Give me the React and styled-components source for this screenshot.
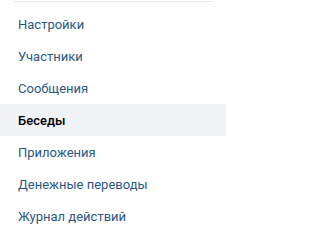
import styled, { createGlobalStyle } from "styled-components";

const GlobalStyle = createGlobalStyle`
  body {
    margin: 0;
    background: #fff;
    font-family: Roboto, "Open Sans", "Liberation Sans", sans-serif;
  }
`;

const Menu = styled.nav`
  width: 226px;
  display: flex;
  flex-direction: column;
`;

const Separator = styled.div`
  height: 1px;
  margin: 1px 13px 6px;
  background-color: #e7e8ec;
`;

const MenuItem = styled.a`
  display: flex;
  align-items: center;
  height: 32px;
  padding: 0 18px;
  font-size: 13px;
  text-decoration: none;
  color: ${(p) => (p.$active ? "#000" : "#2a5885")};
  font-weight: ${(p) => (p.$active ? 500 : 400)};
  background-color: ${(p) => (p.$active ? "#f0f2f5" : "transparent")};
  cursor: pointer;
`;

const items = [
  "Настройки",
  "Участники",
  "Сообщения",
  "Беседы",
  "Приложения",
  "Денежные переводы",
  "Журнал действий",
];

export default function App() {
  return (
    <>
      <GlobalStyle />
      <Menu>
        <Separator />
        {items.map((label) => (
          <MenuItem key={label} $active={label === "Беседы"}>
            {label}
          </MenuItem>
        ))}
      </Menu>
    </>
  );
}
